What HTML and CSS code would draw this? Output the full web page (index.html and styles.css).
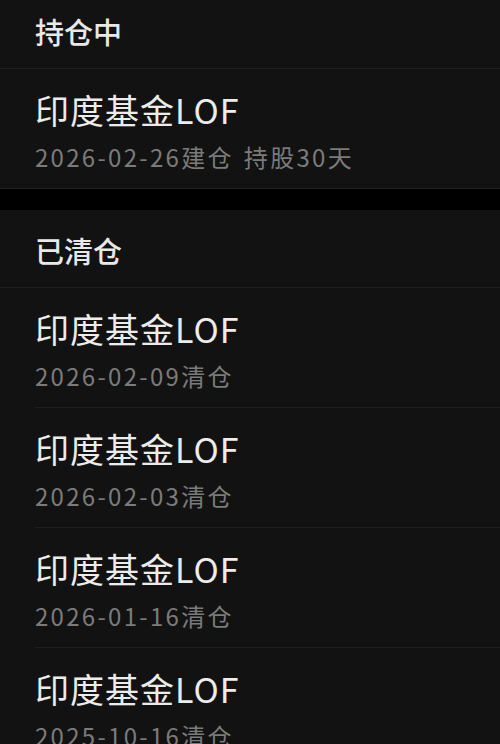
FILE: index.html
```html
<!DOCTYPE html>
<html lang="zh-CN">
<head>
<meta charset="UTF-8" />
<meta name="viewport" content="width=device-width, initial-scale=1" />
<title>持仓记录</title>
<link rel="stylesheet" href="styles.css">
</head>
<body>

<div class="section">
  <div class="section-title first">持仓中</div>
  <div class="item last">
    <div class="name">印度基金LOF</div>
    <div class="meta"><span>2026-02-26建仓</span><span class="hold">持股30天</span></div>
  </div>
</div>

<div class="section">
  <div class="section-title">已清仓</div>
  <div class="item">
    <div class="name">印度基金LOF</div>
    <div class="meta">2026-02-09清仓</div>
  </div>
  <div class="item">
    <div class="name">印度基金LOF</div>
    <div class="meta">2026-02-03清仓</div>
  </div>
  <div class="item">
    <div class="name">印度基金LOF</div>
    <div class="meta">2026-01-16清仓</div>
  </div>
  <div class="item">
    <div class="name">印度基金LOF</div>
    <div class="meta">2025-10-16清仓</div>
  </div>
</div>

</body>
</html>
```

FILE: styles.css
```css
body {
  margin: 0;
  background: #000;
  font-family: "Noto Sans CJK SC", "Noto Sans", sans-serif;
  overflow: hidden;
}
.section {
  background: #121212;
  margin-bottom: 21px;
}
.section-title {
  height: 77px;
  line-height: 80px;
  padding-left: 35px;
  font-size: 29px;
  font-weight: 500;
  color: #e8e8e8;
  border-bottom: 1px solid #1f1f1f;
}
.section-title.first {
  height: 68px;
  line-height: 62px;
}
.item {
  margin-left: 35px;
  padding: 21px 0 16px;
  border-bottom: 1px solid #1f1f1f;
}
.item.last {
  margin-left: 0;
  padding-left: 35px;
}
.name {
  font-size: 34px;
  line-height: 40px;
  color: #ececec;
  letter-spacing: 1px;
}
.meta {
  margin-top: 12px;
  font-size: 24px;
  line-height: 30px;
  color: #7b7b7b;
  letter-spacing: 2.3px;
}
.hold {
  margin-left: 10px;
}
```
